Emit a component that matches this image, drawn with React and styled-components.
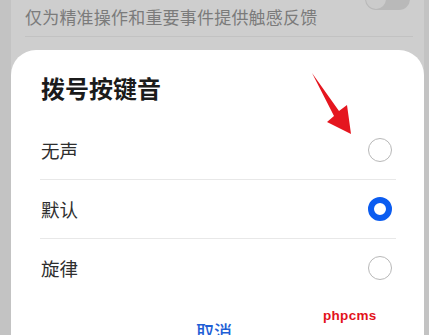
import React from "react";
import styled, { createGlobalStyle } from "styled-components";

const Global = createGlobalStyle`
  html, body { margin: 0; padding: 0; }
  body {
    width: 429px; height: 335px; overflow: hidden;
    background: #c3c3c3;
    font-family: "Noto Sans CJK SC", "Noto Sans", sans-serif;
  }
`;

const Page = styled.div`
  position: relative;
  width: 429px;
  height: 335px;
  overflow: hidden;
  padding: 0 5px 0 11px;
  box-sizing: border-box;
`;

const Sheet = styled.div`
  background: #cecece;
  height: 100%;
  display: flex;
  flex-direction: column;
`;

const SettingsRow = styled.div`
  position: relative;
  flex: 0 0 50px;
  height: 50px;
  padding: 0 11px 0 14px;
  box-sizing: border-box;
`;

const SettingsText = styled.div`
  font-size: 17px;
  line-height: 24px;
  color: #7b7b7b;
  padding-top: 5px;
  letter-spacing: 0.2px;
`;

const SettingsDivider = styled.div`
  height: 1px;
  background: #c2c2c2;
  margin-top: 7px;
`;

const Toggle = styled.div`
  position: absolute;
  right: 14px;
  top: -12px;
  width: 45px;
  height: 22px;
  border-radius: 11px;
  background: #b9b9b9;
  &::before {
    content: "";
    position: absolute;
    left: 1px;
    top: 1px;
    width: 20px;
    height: 20px;
    border-radius: 50%;
    background: #cbcbcb;
  }
`;

const Dialog = styled.div`
  flex: 1 0 auto;
  background: #ffffff;
  border-radius: 25px 25px 0 0;
  padding: 24px 28px 0 29px;
  display: flex;
  flex-direction: column;
`;

const Title = styled.div`
  font-size: 24px;
  line-height: 28px;
  font-weight: 700;
  color: #1b1b1b;
  padding-left: 1px;
  margin-bottom: 19px;
`;

const Option = styled.div`
  height: 58px;
  display: flex;
  align-items: center;
  justify-content: space-between;
  border-bottom: ${(p) => (p.$last ? "none" : "1px solid #e8e8e8")};
  padding: 0 4px 0 1px;
`;

const OptionLabel = styled.span`
  font-size: 18.5px;
  color: #2e2e2e;
`;

const Radio = styled.span`
  width: 24px;
  height: 24px;
  box-sizing: border-box;
  border-radius: 50%;
  border: ${(p) => (p.$checked ? "6px solid #0b5cf0" : "1.5px solid #b8b8b8")};
  background: #fff;
`;

const Footer = styled.div`
  display: flex;
  justify-content: center;
  padding-top: 22px;
  padding-right: 8px;
`;

const Cancel = styled.span`
  font-size: 18px;
  line-height: 24px;
  color: #1f5fd6;
  font-weight: 500;
`;

const Arrow = styled.svg`
  position: absolute;
  left: 0;
  top: 0;
  pointer-events: none;
`;

const Watermark = styled.span`
  position: absolute;
  left: 323px;
  top: 308px;
  font-family: "Liberation Sans", Arial, sans-serif;
  font-weight: 700;
  font-size: 13.5px;
  color: #e3121b;
  letter-spacing: 0.3px;
`;

const options = [
  { label: "无声", checked: false },
  { label: "默认", checked: true },
  { label: "旋律", checked: false },
];

export default function App() {
  return (
    <Page>
      <Global />
      <Sheet>
        <SettingsRow>
          <Toggle />
          <SettingsText>仅为精准操作和重要事件提供触感反馈</SettingsText>
          <SettingsDivider />
        </SettingsRow>
        <Dialog>
          <Title>拨号按键音</Title>
          {options.map((o, i) => (
            <Option key={o.label} $last={i === options.length - 1}>
              <OptionLabel>{o.label}</OptionLabel>
              <Radio $checked={o.checked} />
            </Option>
          ))}
          <Footer>
            <Cancel>取消</Cancel>
          </Footer>
        </Dialog>
      </Sheet>
      <Arrow width="429" height="335" viewBox="0 0 429 335">
        <polygon
          points="312,73 339,111 347,105 351,134 327,122 334,116"
          fill="#e5161f"
        />
      </Arrow>
      <Watermark>phpcms</Watermark>
    </Page>
  );
}
